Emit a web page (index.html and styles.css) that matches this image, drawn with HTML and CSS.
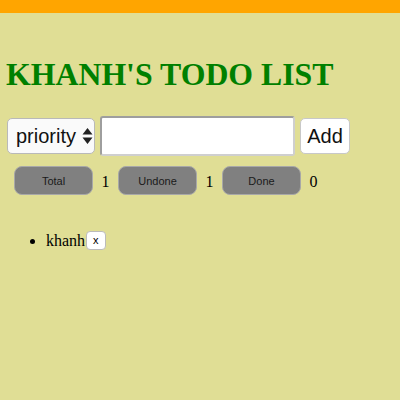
FILE: index.html
```html
<!DOCTYPE html>
<html>
<head>
<meta charset="utf-8">
<link rel="stylesheet" href="styles.css">
</head>
<body>
<div class="topbar"></div>
<div class="app">
  <h1 class="title">KHANH'S TODO LIST</h1>
  <div class="form">
    <div class="select">priority
      <svg class="arrows" width="11" height="18" viewBox="0 0 11 18"><path d="M0.5 7.5 L5.5 1 L10.5 7.5 Z M0.5 10.5 L5.5 17 L10.5 10.5 Z" fill="#222"/></svg>
    </div>
    <div class="input"></div>
    <div class="add">Add</div>
  </div>
  <div class="stats">
    <div class="stat">Total</div><span class="num">1</span>
    <div class="stat">Undone</div><span class="num">1</span>
    <div class="stat">Done</div><span class="num">0</span>
  </div>
  <ul class="list">
    <li>khanh<span class="del">x</span></li>
  </ul>
</div>
</body>
</html>
```
FILE: styles.css
```css
html, body { margin: 0; padding: 0; }
body {
  background: #e0de95;
  font-family: "Liberation Serif", serif;
  width: 400px; height: 400px;
}
.topbar { height: 13px; background: #ffa500; }
.app { padding: 0 7px; }
.title {
  margin: 0 0 0 -1px; padding-top: 43px;
  font-size: 31.8px; font-weight: bold; color: #008000;
  line-height: 37px;
  font-family: "Liberation Serif", serif;
}
.form { display: flex; align-items: center; margin-top: 23px; gap: 5px; }
.select {
  width: 88px; height: 36px; box-sizing: border-box;
  background: #fafafa; border: 1px solid #b9b9b9; border-radius: 5px;
  font-family: "Liberation Sans", sans-serif; font-size: 20px; color: #111;
  display: flex; align-items: center; padding-left: 8px; gap: 4px;
}
.arrows { margin-left: 2px; }
.input {
  width: 195px; height: 40px; box-sizing: border-box;
  background: #fff; border: 2px solid #9e9e9e; border-radius: 3px;
  border-right-color: #cfcfcf; border-bottom-color: #cfcfcf;
}
.add {
  width: 50px; height: 36px; box-sizing: border-box;
  background: #fff; border: 1px solid #c8c8c8; border-radius: 5px;
  font-family: "Liberation Sans", sans-serif; font-size: 20px; color: #111;
  display: flex; align-items: center; justify-content: center;
}
.stats { display: flex; align-items: center; margin-top: 10px; padding-left: 7px; }
.stat {
  width: 79px; height: 29px; box-sizing: border-box;
  background: #808080; border: 1px solid #a8a8a8; border-radius: 8px;
  font-family: "Liberation Sans", sans-serif; font-size: 11px; color: #1a1a1a;
  display: flex; align-items: center; justify-content: center;
}
.num { font-size: 16px; width: 25px; text-align: center; padding-top: 3px; }
.list { margin: 36px 0 0; padding-left: 39px; font-size: 16px; }
.del {
  display: inline-block; font-family: "Liberation Sans", sans-serif;
  font-size: 11px; background: #fff; border: 1px solid #bbb; border-radius: 4px;
  padding: 2px 6px 3px; margin-left: 1px; vertical-align: 2px;
}
```
